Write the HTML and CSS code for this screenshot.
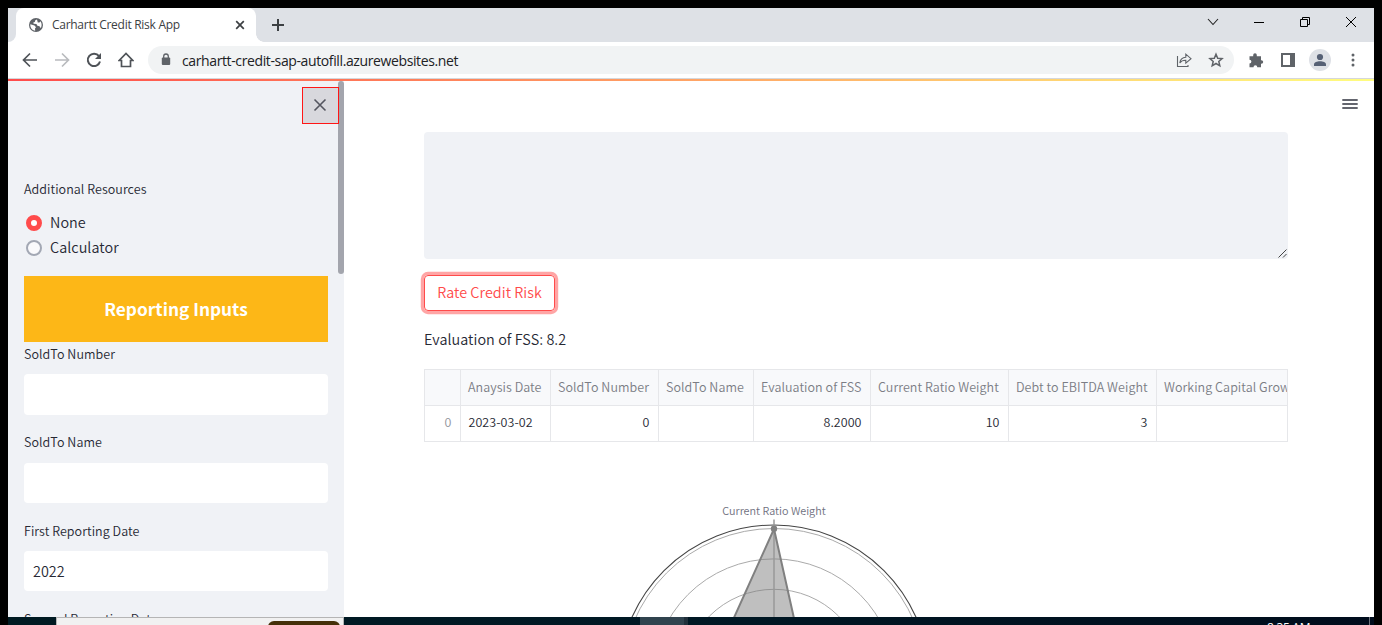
FILE: index.html
```html
<!DOCTYPE html>
<html lang="en">
<head>
<meta charset="utf-8">
<title>Carhartt Credit Risk App</title>
<link rel="stylesheet" href="styles.css">
</head>
<body>
<div class="window">
  <header class="tabstrip">
    <div class="tab">
      <svg class="globe" width="16" height="16" viewBox="0 0 16 16"><circle cx="8" cy="8" r="7" fill="#5f6368"/><path d="M2.300 7.200L6.500 8.600l1.500 1.600-1 1.200.2 2.300C4.200 13.400 2.100 10.700 2.300 7.200zM9 2.400L7.300 3.300 6.800 5l-1.500.6.3 1.200 2.800.1 1 1.900 2.200.4.500 1.600 1-.3c1-2.300.6-4.600-.8-6.200l-.8 1.200-1.700-.1z" fill="#fff"/></svg>
      <span class="tab-title">Carhartt Credit Risk App</span>
      <svg class="tab-close" width="10" height="10" viewBox="0 0 10 10"><path d="M1.200 1.200l7.600 7.600M8.800 1.200L1.200 8.800" stroke="#3c4043" stroke-width="1.700"/></svg>
    </div>
    <svg class="newtab" width="14" height="14" viewBox="0 0 14 14"><path d="M7 1v12M1 7h12" stroke="#3c4043" stroke-width="2"/></svg>
    <div class="controls">
      <svg width="12" height="12" viewBox="0 0 12 12"><path d="M1 3l5 5.500L11 3" fill="none" stroke="#222" stroke-width="1.100"/></svg>
      <svg width="12" height="12" viewBox="0 0 12 12"><path d="M1 6.500h10" stroke="#000"/></svg>
      <svg width="12" height="12" viewBox="0 0 12 12"><path d="M1.500 3.500h7v7h-7zM3.500 3.500v-2h7v7h-2" fill="none" stroke="#000"/></svg>
      <svg width="12" height="12" viewBox="0 0 12 12"><path d="M1 1l10 10M11 1L1 11" stroke="#000"/></svg>
    </div>
  </header>
  <div class="toolbar">
    <div class="nav">
      <svg width="16" height="16" viewBox="0 0 16 16"><path d="M15 8H2M8 1.500L1.500 8 8 14.500" fill="none" stroke="#4f5358" stroke-width="1.700"/></svg>
      <svg width="16" height="16" viewBox="0 0 16 16"><path d="M1 8h13M8 1.500L14.500 8 8 14.500" fill="none" stroke="#b9bbbe" stroke-width="1.700"/></svg>
      <svg width="16" height="16" viewBox="0 0 16 16"><path d="M13 4.200A6.200 6.200 0 1 0 14 9.500" fill="none" stroke="#4f5358" stroke-width="2"/><path d="M15 1v6H9z" fill="#4f5358"/></svg>
      <svg width="16" height="16" viewBox="0 0 16 16"><path d="M3.500 14.500v-6H1.200L8 1.500l6.800 7h-2.300v6z" fill="none" stroke="#4f5358" stroke-width="1.700"/></svg>
    </div>
    <div class="address">
      <svg class="lock" width="10" height="13" viewBox="0 0 10 13"><rect x=".8" y="4.500" width="8.400" height="7.500" rx="1" fill="#5f6368"/><path d="M2.700 5V3.300a2.300 2.300 0 0 1 4.600 0V5" fill="none" stroke="#5f6368" stroke-width="1.300"/></svg>
      <span class="url">carhartt-credit-sap-autofill.azurewebsites.net</span>
      <svg class="share" width="16" height="16" viewBox="0 0 16 16"><path d="M1.500 4v10.500h10.500V13M3.800 11c.5-3.800 2.700-5.500 6-5.700V2.200L15 6.700l-5.200 4.400V8.300C7 8.200 5.200 9 3.800 11z" fill="none" stroke="#5f6368" stroke-width="1.100"/></svg>
      <svg width="16" height="16" viewBox="0 0 16 16"><path d="M8 2.200l1.700 4 4.400.4-3.300 2.900 1 4.300L8 11.500l-3.800 2.300 1-4.300L1.900 6.600l4.400-.4z" fill="none" stroke="#5f6368" stroke-width="1.500"/></svg>
    </div>
    <svg class="puzzle" width="16" height="16" viewBox="0 0 16 16"><path d="M1.500 4.200h3.700V3a1.800 1.800 0 0 1 3.600 0v1.200h4.200v4h.4a1.800 1.800 0 0 1 0 3.600H13v3.400H9.300a1.900 1.900 0 0 0-3.800 0h-4v-3.700a1.900 1.900 0 0 0 0-3.800z" fill="#5f6368"/></svg>
    <svg class="panel" width="14" height="14" viewBox="0 0 14 14"><path d="M0 0h14v14H0zM2 2v10h7V2z" fill="#5f6368" fill-rule="evenodd"/></svg>
    <svg class="avatar" width="22" height="22" viewBox="0 0 22 22"><circle cx="11" cy="11" r="11" fill="#dee1e6"/><circle cx="11" cy="8" r="3.100" fill="#566175"/><path d="M5 17v-1.500C5 13.500 8 12.300 11 12.300s6 1.200 6 3.200V17z" fill="#566175"/></svg>
    <svg class="dots" width="4" height="14" viewBox="0 0 4 14"><g fill="#5f6368"><circle cx="2" cy="2" r="1.500"/><circle cx="2" cy="7" r="1.500"/><circle cx="2" cy="12" r="1.500"/></g></svg>
  </div>
  <div class="accent"></div>
  <div class="page">
    <aside class="sidebar">
      <div class="sidebar-top">
        <div class="close"><svg width="14" height="14" viewBox="0 0 14 14"><path d="M1.500 1.500l11 11M12.500 1.500l-11 11" stroke="#54555f" stroke-width="1.600"/></svg></div>
      </div>
      <div class="form">
        <div class="label">Additional Resources</div>
        <div class="radios">
          <div class="radio"><span class="dot on"></span><span class="radio-text">None</span></div>
          <div class="radio"><span class="dot"></span><span class="radio-text">Calculator</span></div>
        </div>
        <h2 class="banner">Reporting Inputs</h2>
        <div class="label">SoldTo Number</div>
        <div class="input tall"></div>
        <div class="label">SoldTo Name</div>
        <div class="input low"></div>
        <div class="label">First Reporting Date</div>
        <div class="input">2022</div>
        <div class="label">Second Reporting Date</div>
      </div>
      <div class="scroll"></div>
    </aside>
    <main class="main">
      <div class="menurow"><svg width="16" height="12" viewBox="0 0 16 12"><path d="M.3 2h15.400M.3 6h15.400M.3 10h15.400" stroke="#31333f" stroke-width="1.700"/></svg></div>
      <div class="content">
        <div class="textarea"><svg width="9" height="9" viewBox="0 0 9 9"><path d="M.5 8.500l8-8M5 8.500L8.500 5" stroke="#444" stroke-width="1"/></svg></div>
        <div class="button">Rate Credit Risk</div>
        <p class="result">Evaluation of FSS: 8.2</p>
        <div class="table">
          <div class="row head"><span></span><span>Anaysis Date</span><span>SoldTo Number</span><span>SoldTo Name</span><span>Evaluation of FSS</span><span>Current Ratio Weight</span><span>Debt to EBITDA Weight</span><span>Working Capital Growth</span></div>
          <div class="row"><span class="idx">0</span><span class="date">2023-03-02</span><span>0</span><span></span><span>8.2000</span><span>10</span><span>3</span><span></span></div>
        </div>
        <div class="chart">
          <div class="axis-name">Current Ratio Weight</div>
          <svg width="320" height="100" viewBox="614 517 320 100">
            <g fill="none" stroke="#aaa"><circle cx="774" cy="680.500" r="152"/><circle cx="774" cy="680.500" r="121.600"/><circle cx="774" cy="680.500" r="91.200"/></g>
            <circle cx="774" cy="680.500" r="155.500" fill="none" stroke="#444" stroke-width="1.100"/>
            <path d="M774 529L732.500 621h62z" fill="#808080" fill-opacity=".5"/>
            <path d="M774 519.500V625" stroke="#999" stroke-width="1.500"/>
            <path d="M732.500 621L774 529l20.600 92" fill="none" stroke="#808080" stroke-width="2"/>
            <circle cx="774" cy="528.800" r="3.200" fill="#808080"/>
          </svg>
        </div>
      </div>
    </main>
  </div>
</div>
<footer class="taskbar">
  <div class="search"><div class="pill"></div></div>
  <div class="active-app"></div>
  <div class="clock">8:35 AM</div>
  <div class="peek"></div>
</footer>
</body>
</html>
```
FILE: styles.css
```css
* { box-sizing: border-box; }
body { margin: 0; padding: 8px 8px 0; width: 1382px; height: 625px; overflow: hidden; background: #000; color: #262833; font-family: "Noto Sans CJK SC", "Noto Sans", sans-serif; font-weight: 350; }
svg { display: block; flex: none; }
.window { height: 609px; display: flex; flex-direction: column; background: #fff; overflow: hidden; }

.tabstrip { height: 34px; flex: none; display: flex; align-items: center; background: linear-gradient(#fff, #fff) 0 100% / 9px 8px no-repeat, #dee1e6; padding-left: 8px; font-family: "Open Sans", sans-serif; font-weight: 400; position: relative; }
.tabstrip::before { content: ""; position: absolute; left: 0; bottom: 0; width: 8px; height: 8px; background: #dee1e6; border-bottom-right-radius: 8px; }
.tab { position: relative; width: 240px; height: 34px; padding: 0 11px 0 12px; display: flex; align-items: center; background: #fff; border-radius: 8px 8px 0 0; }
.tab::after { content: ""; position: absolute; left: 240px; bottom: 0; width: 8px; height: 8px; background: radial-gradient(circle at 100% 0, #dee1e6 7.5px, #fff 8px); }
.tab-title { margin-left: 8px; flex: 1; font-size: 12px; letter-spacing: -.28px; color: #3c4043; white-space: nowrap; padding-bottom: 2px; }
.newtab { margin-left: 15px; }
.controls { margin-left: auto; margin-right: 17px; margin-bottom: 7px; display: flex; gap: 34px; }

.toolbar { height: 37px; flex: none; display: flex; align-items: center; background: #fff; border-bottom: 1px solid #d5d7db; padding-left: 14px; }
.nav { display: flex; gap: 16px; width: 126px; }
.address { height: 28px; width: 1086px; border-radius: 14px; background: #f1f3f4; display: flex; align-items: center; padding: 0 10px 0 13px; font-family: "Open Sans", sans-serif; font-weight: 400; }
.lock { margin-bottom: 2px; }
.url { margin-left: 11px; flex: 1; font-size: 14px; color: #202124; letter-spacing: -.38px; white-space: nowrap; }
.share { margin-right: 16px; }
.puzzle { margin-left: 14px; }
.panel { margin-left: 17px; }
.avatar { margin-left: 14px; }
.dots { margin-left: 20px; }
.accent { height: 2px; flex: none; background: linear-gradient(90deg, #ff4b4b, #fffd80); }

.page { flex: 1; min-height: 0; display: flex; }
.sidebar { width: 336px; position: relative; overflow: hidden; background: #f0f2f6; }
.sidebar-top { height: 98px; padding: 6px 5px 0 0; display: flex; justify-content: flex-end; }
.close { width: 37px; height: 37px; padding: 0 1px 1px 0; border: 1px solid #ff1616; background: #d8d8dd; display: flex; align-items: center; justify-content: center; position: relative; z-index: 1; }
.scroll { position: absolute; right: 0; top: 0; width: 6px; height: 193px; border-radius: 3px; background: #a3a5ad; }
.form { padding: 0 16px; }
.label { height: 20px; line-height: 20px; font-size: 12.5px; letter-spacing: .06px; white-space: nowrap; }
.radios { padding: 11px 2px 0; height: 77px; }
.radio { height: 25px; display: flex; align-items: center; gap: 8px; font-size: 14.4px; line-height: 24px; }
.radio + .radio { height: 26px; }
.radio-text { padding-bottom: 2px; letter-spacing: .05px; }
.dot { width: 16px; height: 16px; border-radius: 50%; border: 2px solid #a3a8b4; background: #fafafc; }
.dot.on { border: 5px solid #ff4b4b; background: #fff; }
.banner { height: 66px; margin: 0 0 2px; background: #fdb717; color: #fff; font-size: 17.3px; line-height: 66px; font-weight: 700; text-align: center; }
.input { height: 40px; margin: 10px 0 18px; padding: 0 9px; background: #fff; border-radius: 4px; font-size: 14.4px; line-height: 39px; }
.input.tall { height: 41px; margin-bottom: 17px; }
.input.low { margin-top: 11px; }

.main { flex: 1; min-width: 0; overflow: hidden; }
.menurow { height: 51px; padding: 17px 16px 0; display: flex; justify-content: flex-end; }
.content { width: 864px; margin-left: 80px; }
.textarea { height: 127px; border-radius: 4px; background: #f0f2f6; display: flex; align-items: flex-end; justify-content: flex-end; padding: 1px; }
.button { width: 131px; height: 36px; margin-top: 16px; border: 1px solid #ff4b4b; border-radius: 4px; box-shadow: 0 0 0 3.2px rgba(255, 75, 75, .5); color: #ff4b4b; font-size: 14.4px; letter-spacing: .05px; line-height: 32px; text-align: center; white-space: nowrap; }
.result { margin: 16px 0 18px; height: 24px; line-height: 24px; font-size: 14.4px; letter-spacing: .05px; }
.table { height: 73px; border: 1px solid #e6e7ea; overflow: hidden; font-size: 12.5px; letter-spacing: .06px; }
.row { display: grid; grid-template-columns: 36px 90px 108px 95px 117px 138px 148px 180px; height: 35px; line-height: 32px; width: 912px; }
.row span { border-right: 1px solid #e6e7ea; padding: 0 8.5px 0 8px; text-align: right; white-space: nowrap; }
.row.head { height: 36px; line-height: 34px; background: #f8f9fb; border-bottom: 1px solid #e6e7ea; color: #7b7d85; }
.row.head span { text-align: left; padding: 0 0 0 7px; }
.row .idx { color: #92949c; }
.row .date { text-align: left; padding-left: 7.5px; }
.chart { padding-top: 61px; width: 700px; }
.axis-name { height: 15px; line-height: 15px; font-size: 10.8px; color: #6f7180; text-align: center; }
.chart svg { margin: -1px auto 0; }

.taskbar { height: 8px; display: flex; overflow: hidden; background: linear-gradient(90deg, #001a22, #001824 50%, #000c1c); }
.search { width: 288px; height: 8px; margin-left: 48px; border: 1px solid #b5b5b5; border-bottom: 0; background: #f1f1f1; display: flex; justify-content: flex-end; padding: 3px 3px 0 0; }
.pill { width: 72px; height: 10px; border-radius: 6px 6px 0 0; background: #453009; }
.active-app { width: 48px; margin-left: 296px; background: #30434e; border-right: 4px solid #20303b; }
.clock { margin-left: 579px; width: 60px; font: 12px/14px "Open Sans", sans-serif; letter-spacing: -.3px; color: #fff; padding-top: 4px; white-space: nowrap; }
.peek { width: 1px; margin-left: 42px; background: #6d737d; }
```
